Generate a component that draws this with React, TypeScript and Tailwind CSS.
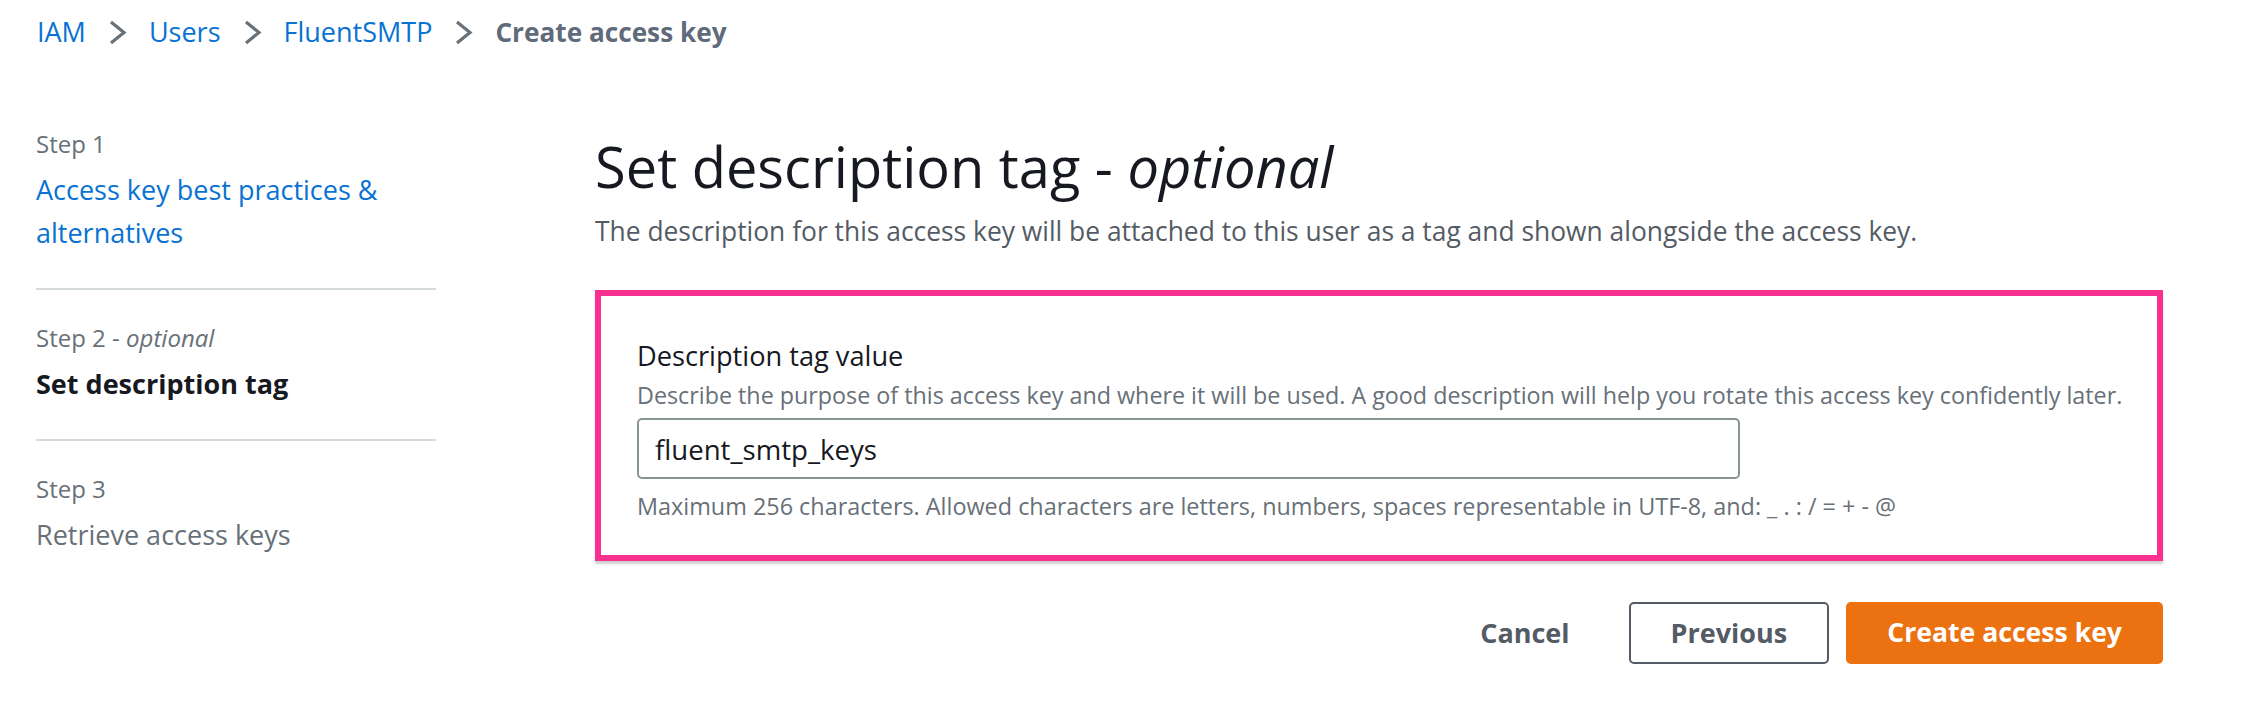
import React from "react";

function Chevron() {
  return (
    <svg width="19" height="25" viewBox="0 0 19 25" className="shrink-0">
      <polyline points="3,2 16,12.5 3,23" fill="none" stroke="#687078" strokeWidth="3.2" strokeLinecap="butt" strokeLinejoin="miter" />
    </svg>
  );
}

function NavStep({ label, title, kind }: { label: React.ReactNode; title: string; kind: "link" | "active" | "disabled" }) {
  const titleCls =
    kind === "link"
      ? "text-[#0972d3]"
      : kind === "active"
      ? "text-[#16191f] font-bold"
      : "text-[#687078]";
  return (
    <div className="pt-[33px] pb-[34px]">
      <div className="text-[24px] leading-[30px] text-[#687078]">{label}</div>
      <div className={`mt-[9px] text-[27px] leading-[43px] ${titleCls}`}>{title}</div>
    </div>
  );
}

export default function App() {
  return (
    <div className="w-[2250px] h-[726px] bg-white font-['Open_Sans','Noto_Sans',sans-serif] overflow-hidden">
      {/* Breadcrumb */}
      <div className="h-[64px] pl-[37px] flex items-center gap-[22px] text-[27px] leading-[36px]">
        <span className="text-[#0972d3]">IAM</span>
        <Chevron />
        <span className="text-[#0972d3]">Users</span>
        <Chevron />
        <span className="text-[#0972d3]">FluentSMTP</span>
        <Chevron />
        <span className="text-[#5f6b7a] font-bold text-[26.2px]">Create access key</span>
      </div>

      <div className="flex pl-[36px]">
        {/* Left nav */}
        <nav className="w-[400px] shrink-0 mt-[32px]">
          <NavStep label="Step 1" title="Access key best practices & alternatives" kind="link" />
          <div className="h-[2px] bg-[#d5dbdb]" />
          <NavStep
            label={
              <>
                Step 2 - <i>optional</i>
              </>
            }
            title="Set description tag"
            kind="active"
          />
          <div className="h-[2px] bg-[#d5dbdb]" />
          <NavStep label="Step 3" title="Retrieve access keys" kind="disabled" />
        </nav>

        {/* Main */}
        <main className="ml-[159px] w-[1568px] shrink-0 pt-[70px]">
          <h1 className="text-[56px] leading-[64px] text-[#16191f] font-normal">
            Set description tag - <i>optional</i>
          </h1>
          <p className="mt-[15px] text-[26.4px] leading-[36px] text-[#545b64]">
            The description for this access key will be attached to this user as a tag and shown alongside the access key.
          </p>

          <div className="mt-[41px] border-[6px] border-[#f8308f] shadow-[0_3px_2px_rgba(0,0,0,0.18)] pl-[36px] pr-[30px] pt-[42px] pb-[34px]">
            <div className="text-[27.2px] leading-[36px] text-[#16191f]">Description tag value</div>
            <div className="mt-[6px] text-[23.3px] leading-[30px] text-[#687078] whitespace-nowrap">
              Describe the purpose of this access key and where it will be used. A good description will help you rotate this access key confidently later.
            </div>
            <div className="mt-[8px] w-[1103px] h-[61px] border-2 border-[#879596] rounded-[5px] flex items-center px-[16px]">
              <span className="text-[27.6px] leading-[36px] text-[#16191f]">fluent_smtp_keys</span>
            </div>
            <div className="mt-[12px] text-[23.4px] leading-[30px] text-[#687078]">
              Maximum 256 characters. Allowed characters are letters, numbers, spaces representable in UTF-8, and: _ . : / = + - @
            </div>
          </div>

          <div className="mt-[41px] flex justify-end gap-[17px]">
            <button className="h-[62px] px-[40px] text-[27px] font-bold text-[#545b64] border-2 border-transparent">Cancel</button>
            <button className="h-[62px] px-[40px] text-[27px] font-bold text-[#545b64] border-2 border-[#545b64] rounded-[5px] bg-white">Previous</button>
            <button className="h-[62px] px-[41px] text-[26.6px] font-bold text-white bg-[#ec7211] rounded-[5px]">Create access key</button>
          </div>
        </main>
      </div>
    </div>
  );
}
